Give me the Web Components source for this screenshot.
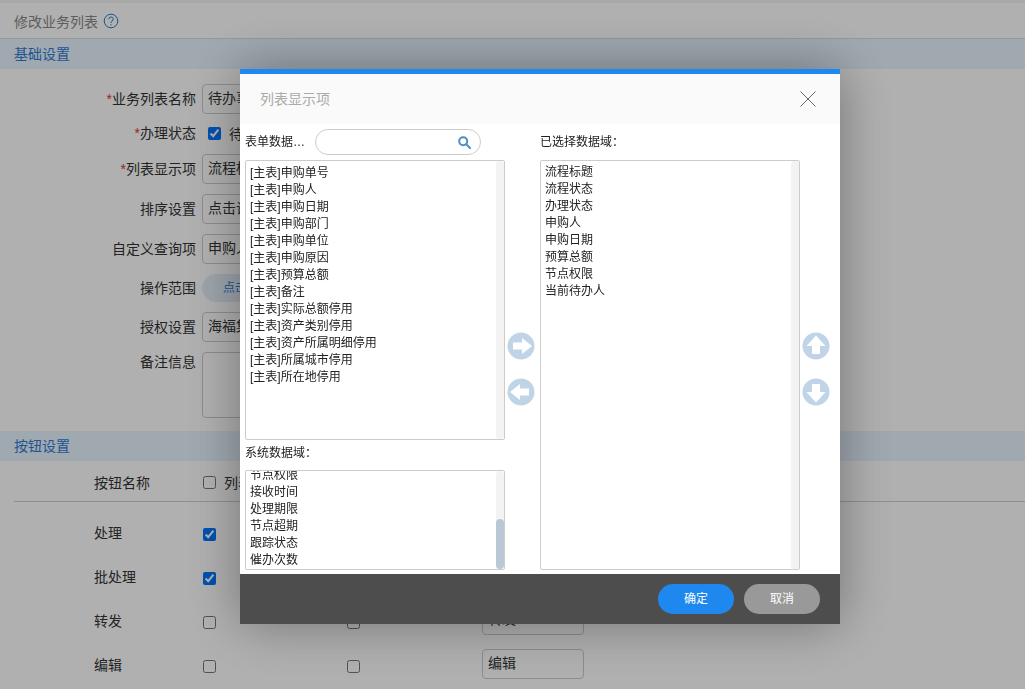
<!DOCTYPE html>
<html lang="zh">
<head>
<meta charset="utf-8">
<title>修改业务列表</title>
<style>
  html, body { margin: 0; height: 100%; overflow: hidden; }
  body { font: 14px "Liberation Sans", "Noto Sans CJK SC", sans-serif; color: #333; background: #fff; }
</style>
</head>
<body>
<biz-page></biz-page>
<modal-mask>
  <field-dialog heading="列表显示项"></field-dialog>
</modal-mask>

<script>
const ARROWS = {
  right: 'M-8 -3.5H1V-8L11 0L1 8V3.5H-8Z',
  left: 'M8 -3.5H-1V-8L-11 0L-1 8V3.5H8Z',
  up: 'M-4 8V0H-9.5L0 -10.5L9.5 0H4V8Z',
  down: 'M-4 -8V0H-9.5L0 10.5L9.5 0H4V-8Z'
}

class SectionBand extends HTMLElement {
  constructor () {
    super()
    this.attachShadow({ mode: 'open' })
    this.shadowRoot.innerHTML = `
      <style>
        :host { display: block; height: 30px; line-height: 30px; padding-left: 14px; background: #e8f4ff; color: #2f7bd4; font-size: 14px; }
      </style>
      <slot></slot>
    `
  }
}

class FormRow extends HTMLElement {
  constructor () {
    super()
    this.attachShadow({ mode: 'open' })
    const required = this.hasAttribute('required') ? '<i>*</i>' : ''
    this.shadowRoot.innerHTML = `
      <style>
        :host { display: flex; align-items: center; min-height: 20px; }
        label { width: 196px; margin-right: 6px; padding-bottom: 2px; text-align: right; flex: none; }
        :host([top]) { align-items: flex-start; }
        :host([top]) label { margin-top: -1px; }
        i { color: #e03030; font-style: normal; }
      </style>
      <label>${required}${this.getAttribute('label')}</label>
      <slot></slot>
    `
  }
}

class TextBox extends HTMLElement {
  constructor () {
    super()
    this.attachShadow({ mode: 'open' })
    this.shadowRoot.innerHTML = `
      <style>
        :host { display: block; box-sizing: border-box; width: 400px; height: 30px; line-height: 27px; padding: 0 5px; border: 1px solid #ccc; border-radius: 4px; background: #fff; white-space: nowrap; overflow: hidden; }
        :host([tall]) { height: 66px; }
        :host([pill]) { height: 28px; line-height: 26px; padding: 0 20px; width: 120px; border-radius: 14px; border-color: #e4eef8; background: #e4eef8; color: #2f7bd4; font-size: 12px; }
        :host([short]) { width: 102px; }
      </style>
      <slot></slot>
    `
  }
}

class ButtonRow extends HTMLElement {
  constructor () {
    super()
    this.attachShadow({ mode: 'open' })
    const check = (on) => `<input type="checkbox"${on ? ' checked' : ''}>`
    this.shadowRoot.innerHTML = `
      <style>
        :host { display: grid; grid-template-columns: 109px 144px 135px 102px; align-items: center; height: 44px; padding-left: 94px; }
        input { width: 13px; height: 13px; margin: 5px 0 0; }
      </style>
      <span>${this.getAttribute('name')}</span>
      ${check(this.hasAttribute('checked'))}
      ${check(false)}
      <text-box short>${this.getAttribute('name')}</text-box>
    `
  }
}

class BizPage extends HTMLElement {
  constructor () {
    super()
    this.attachShadow({ mode: 'open' })
    this.shadowRoot.innerHTML = `
      <style>
        :host { display: block; }
        .topbar { height: 3px; background: #f3f3f3; }
        .title { display: flex; align-items: center; gap: 5px; height: 35px; padding-left: 14px; border-bottom: 1px solid #dadada; color: #888; }
        .title svg { display: block; }
        .form { display: flex; flex-direction: column; gap: 10px; padding: 15px 0 13px; }
        .check { display: flex; align-items: center; gap: 8px; }
        .check input { width: 13px; height: 13px; margin: 0 0 0 6px; }
        .shifted { height: 20px; margin: -1px 0 1px; }
        .head { display: flex; align-items: center; height: 40px; margin-left: 14px; padding-left: 80px; border-bottom: 1px solid #d0d0d0; }
        .head span { width: 109px; padding-top: 2px; }
        .head input { width: 13px; height: 13px; margin: 2px 8px 0 0; }
        .rows { padding-top: 8px; }
      </style>
      <div class="topbar"></div>
      <div class="title">修改业务列表
        <svg width="16" height="16" viewBox="0 0 16 16" fill="none" stroke="#2a78d2">
          <circle cx="8" cy="8" r="6.8"/>
          <path d="M5.8 6.2A2.2 2.2 0 1 1 8.9 8.2C8.2 8.6 8 9 8 10"/>
          <path d="M8 11.2V12.4"/>
        </svg>
      </div>
      <section-band>基础设置</section-band>
      <div class="form">
        <form-row required label="业务列表名称"><text-box>待办事项列表</text-box></form-row>
        <form-row class="shifted" required label="办理状态"><div class="check"><input type="checkbox" checked><span>待办</span></div></form-row>
        <form-row required label="列表显示项"><text-box>流程标题,流程状态</text-box></form-row>
        <form-row label="排序设置"><text-box>点击设置</text-box></form-row>
        <form-row label="自定义查询项"><text-box>申购人,申购日期</text-box></form-row>
        <form-row label="操作范围"><text-box pill>点击设置</text-box></form-row>
        <form-row label="授权设置"><text-box>海福集团</text-box></form-row>
        <form-row top label="备注信息"><text-box tall></text-box></form-row>
      </div>
      <section-band>按钮设置</section-band>
      <div class="head"><span>按钮名称</span><input type="checkbox"><span>列表</span></div>
      <div class="rows">
        <button-row name="处理" checked></button-row>
        <button-row name="批处理" checked></button-row>
        <button-row name="转发"></button-row>
        <button-row name="编辑"></button-row>
      </div>
    `
  }
}

class ModalMask extends HTMLElement {
  constructor () {
    super()
    this.attachShadow({ mode: 'open' })
    this.shadowRoot.innerHTML = `
      <style>
        :host { position: fixed; inset: 0; background: rgba(0, 0, 0, .31); }
      </style>
      <slot></slot>
    `
  }
}

class FieldList extends HTMLElement {
  constructor () {
    super()
    this.attachShadow({ mode: 'open' })
    const items = this.getAttribute('items').split(',')
    this.shadowRoot.innerHTML = `
      <style>
        :host { display: flex; box-sizing: border-box; width: 260px; height: var(--list-height, 280px); border: 1px solid #ccc; border-radius: 2px; background: #fff; }
        .scroll { flex: 1; overflow: hidden; padding: var(--list-pad, 3px) 0 0 4px; box-sizing: border-box; }
        .scroll div { height: 17px; line-height: 17px; font-size: 12px; color: #222; white-space: nowrap; }
        .track { display: flex; flex-direction: column; justify-content: flex-end; flex: none; width: 8px; background: #f3f3f3; border-radius: 4px; }
        .thumb { height: 50px; background: #b9c7d6; border-radius: 4px; }
      </style>
      <div class="scroll">${items.map(t => `<div>${t}</div>`).join('')}</div>
      <div class="track">${this.hasAttribute('to-end') ? '<div class="thumb"></div>' : ''}</div>
    `
  }

  connectedCallback () {
    if (this.hasAttribute('to-end')) {
      const box = this.shadowRoot.querySelector('.scroll')
      box.scrollTop = box.scrollHeight
    }
  }
}

class ArrowButton extends HTMLElement {
  constructor () {
    super()
    this.attachShadow({ mode: 'open' })
    this.shadowRoot.innerHTML = `
      <style>
        :host { display: block; width: 28px; height: 28px; }
        svg { display: block; }
      </style>
      <svg width="28" height="28" viewBox="-14 -14 28 28">
        <circle r="13.5" fill="#bfd5e7"/>
        <path d="${ARROWS[this.getAttribute('dir')]}" fill="#fff"/>
      </svg>
    `
  }
}

class FieldDialog extends HTMLElement {
  constructor () {
    super()
    this.attachShadow({ mode: 'open' })
    const left = '申购单号,申购人,申购日期,申购部门,申购单位,申购原因,预算总额,备注,实际总额停用,资产类别停用,资产所属明细停用,所属城市停用,所在地停用'
      .split(',').map(t => '[主表]' + t).join(',')
    this.shadowRoot.innerHTML = `
      <style>
        :host { position: absolute; left: 240px; top: 69px; width: 600px; height: 555px; display: flex; flex-direction: column; box-shadow: 0 0 50px rgba(0, 0, 0, .36); background: #fff; font-size: 12px; color: #222; }
        header { display: flex; align-items: center; justify-content: space-between; flex: none; height: 50px; padding: 0 24px 0 20px; border-top: 5px solid #1e88ee; background: #fafafa; color: #aaa; font-size: 14px; }
        header span { padding-bottom: 2px; }
        header svg { display: block; }
        main { flex: 1; display: flex; padding: 5px 10px 4px 5px; gap: 0; }
        .col { width: 260px; flex: none; }
        .label { display: flex; align-items: center; height: 26px; margin-bottom: 5px; }
        .label > span { padding-bottom: 3px; }
        .ellip { width: 66px; flex: none; white-space: nowrap; overflow: hidden; text-overflow: ellipsis; margin-right: 4px; }
        .search { display: flex; align-items: center; justify-content: flex-end; box-sizing: border-box; width: 166px; height: 26px; padding-right: 9px; border: 1px solid #ccc; border-radius: 13px; }
        .sys { height: 30px; line-height: 26px; }
        .arrows { width: 35px; flex: none; display: flex; flex-direction: column; align-items: center; gap: 18px; padding: 203px 4px 0 0; box-sizing: border-box; }
        footer { flex: none; display: flex; justify-content: flex-end; align-items: center; gap: 10px; height: 50px; padding-right: 20px; background: #4d4d4d; }
        footer span { width: 76px; height: 30px; line-height: 30px; border-radius: 15px; text-align: center; color: #fff; background: #1e88ee; }
        footer span + span { background: #999; }
      </style>
      <header>
        <span>${this.getAttribute('heading')}</span>
        <svg width="16" height="16" viewBox="0 0 16 16" stroke="#666" fill="none"><path d="M.5 .5L15.5 15.5M15.5 .5L.5 15.5"/></svg>
      </header>
      <main>
        <div class="col">
          <div class="label">
            <span class="ellip">表单数据域：</span>
            <div class="search">
              <svg width="13" height="13" viewBox="0 0 13 13" fill="none" stroke="#4a8fc7" stroke-width="2"><circle cx="5.2" cy="5.2" r="4"/><path d="M8.2 8.2L12 12" stroke-linecap="round"/></svg>
            </div>
          </div>
          <field-list style="--list-pad: 4px" items="${left}"></field-list>
          <div class="sys">系统数据域：</div>
          <field-list to-end style="--list-height: 100px" items="流程标题,流程状态,办理状态,当前节点,当前待办人,节点权限,接收时间,处理期限,节点超期,跟踪状态,催办次数"></field-list>
        </div>
        <div class="arrows">
          <arrow-button dir="right"></arrow-button>
          <arrow-button dir="left"></arrow-button>
        </div>
        <div class="col">
          <div class="label"><span>已选择数据域：</span></div>
          <field-list style="--list-height: 410px" items="流程标题,流程状态,办理状态,申购人,申购日期,预算总额,节点权限,当前待办人"></field-list>
        </div>
        <div class="arrows">
          <arrow-button dir="up"></arrow-button>
          <arrow-button dir="down"></arrow-button>
        </div>
      </main>
      <footer><span>确定</span><span>取消</span></footer>
    `
  }
}

customElements.define('section-band', SectionBand)
customElements.define('text-box', TextBox)
customElements.define('form-row', FormRow)
customElements.define('button-row', ButtonRow)
customElements.define('biz-page', BizPage)
customElements.define('modal-mask', ModalMask)
customElements.define('field-list', FieldList)
customElements.define('arrow-button', ArrowButton)
customElements.define('field-dialog', FieldDialog)
</script>
</body>
</html>
